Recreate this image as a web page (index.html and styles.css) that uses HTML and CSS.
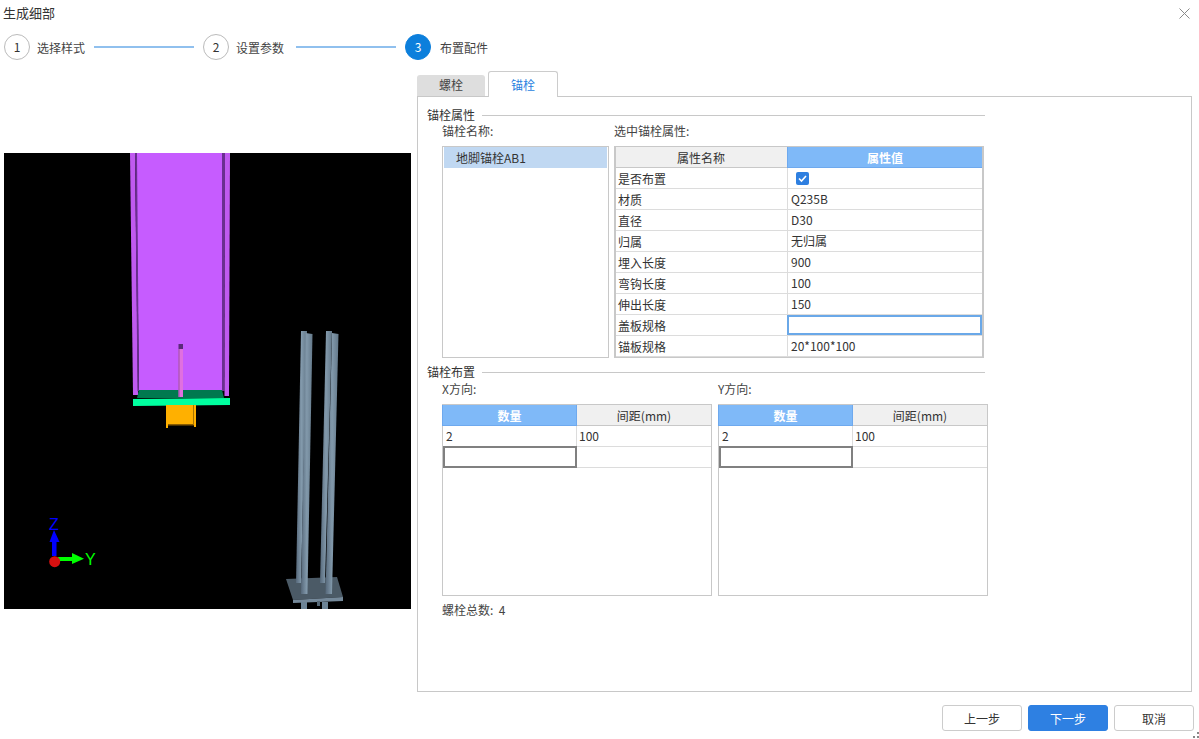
FILE: index.html
```html
<!DOCTYPE html>
<html lang="zh-CN">
<head>
    <meta charset="UTF-8">
    <title>生成细部</title>
    <link rel="stylesheet" href="styles.css">
</head>
<body>
    <div class="dialog">
        <div class="title-bar">
            <span>生成细部</span>
            <svg class="close-icon" width="11" height="11" viewBox="0 0 11 11"><path d="M.5 .5l10 10M10.500 .5l-10 10" stroke="#8a8a8a" fill="none"/></svg>
        </div>

        <div class="steps">
            <div class="step-num">1</div>
            <div class="step-label">选择样式</div>
            <div class="step-line"></div>
            <div class="step-num">2</div>
            <div class="step-label">设置参数</div>
            <div class="step-line"></div>
            <div class="step-num active">3</div>
            <div class="step-label">布置配件</div>
        </div>

        <div class="main">
            <svg class="viewer" width="407" height="456" viewBox="4 153 407 456">
                <defs>
                    <linearGradient id="rod">
                        <stop offset="0" stop-color="#56687a"/>
                        <stop offset="0.500" stop-color="#8299ab"/>
                        <stop offset="1" stop-color="#64798a"/>
                    </linearGradient>
                </defs>
                <rect x="4" y="153" width="407" height="456" fill="#000"/>
                <!-- column -->
                <polygon points="136,153 222,153 222,391 139,391" fill="#c65cff"/>
                <polygon points="130,153 135,153 138,395 133,395" fill="#c05af0"/>
                <polygon points="135,153 137,153 139,391 137.500,391" fill="#6a2f90"/>
                <polygon points="222,153 225,153 224.500,391 222,391" fill="#6a2f90"/>
                <polygon points="225,153 230,153 229,396 224.500,396" fill="#c05af0"/>
                <polygon points="139,390 222,390 224,398 137,398" fill="#00794f"/>
                <polygon points="133,399 230,398 230,405 133,406" fill="#00ff9f"/>
                <polygon points="166,405 196,405 196,427 194,427 194,425 168,425 168,428 166,428" fill="#ffb000"/>
                <polygon points="168,424 194,424 194,425.500 168,425.500" fill="#8a5c00"/>
                <polygon points="193,405 194,405 194,425 193,425" fill="#a87400"/>
                <!-- rod inside column -->
                <rect x="178.500" y="349" width="4.500" height="48" fill="#e070e0"/>
                <rect x="178.500" y="349" width="1" height="48" fill="#9a4aa8"/>
                <rect x="178.500" y="344" width="4.500" height="5" fill="#5a2a7a"/>
                <!-- anchor bolts -->
                <polygon points="286,579 337,577 343,597 293,600" fill="#4b5a66"/>
                <polygon points="293,600 343,597 343,601 293,603" fill="#75899a"/>
                <polygon points="301,602 307,602 307,609 301,609" fill="#6d8496"/>
                <polygon points="322,602 328,602 328,609 322,609" fill="#6d8496"/>
                <polygon points="317,601 320,601 320,606 317,606" fill="#566876"/>
                <polygon points="301,331 307,331 301,583 296,583" fill="url(#rod)"/>
                <polygon points="326,331 332,331 325,583 320,583" fill="url(#rod)"/>
                <polygon points="305.500,333 312.500,334 307.500,594 301,594" fill="url(#rod)"/>
                <polygon points="332,333 338.500,334 332,594 325.500,594" fill="url(#rod)"/>
                <!-- axes -->
                <rect x="52" y="541" width="4.500" height="15" fill="#0000ff"/>
                <polygon points="54,530 59.500,542 49.500,542" fill="#0000ff"/>
                <rect x="58" y="557" width="15" height="4" fill="#00ff00"/>
                <polygon points="72,553 84,558.800 72,564" fill="#00ff00"/>
                <circle cx="54.700" cy="561.700" r="5.500" fill="#d81010"/>
                <text class="axis-label" x="49" y="530" fill="#0000ff">Z</text>
                <text class="axis-label" x="85" y="565" fill="#00ff00">Y</text>
            </svg>

            <div class="right-col">
                <div class="tabs">
                    <div class="tab">螺栓</div>
                    <div class="tab active">锚栓</div>
                </div>
                <div class="panel">
                    <div class="group-title"><span>锚栓属性</span><div class="group-line"></div></div>
                    <div class="attr-row">
                        <div class="name-col">
                            <div class="field-label">锚栓名称:</div>
                            <div class="name-list">
                                <div class="name-item">地脚锚栓AB1</div>
                            </div>
                        </div>
                        <div class="attr-col">
                            <div class="field-label">选中锚栓属性:</div>
                            <div class="attr-box">
                                <table class="grid attr-grid">
                                    <tr><th>属性名称</th><th class="on">属性值</th></tr>
                                    <tr><td>是否布置</td><td><span class="check"><svg width="13" height="13" viewBox="0 0 13 13"><path d="M3 6.500l2.500 2.500 4.500-5" stroke="#fff" stroke-width="1.600" fill="none"/></svg></span></td></tr>
                                    <tr><td>材质</td><td>Q235B</td></tr>
                                    <tr><td>直径</td><td>D30</td></tr>
                                    <tr><td>归属</td><td>无归属</td></tr>
                                    <tr><td>埋入长度</td><td>900</td></tr>
                                    <tr><td>弯钩长度</td><td>100</td></tr>
                                    <tr><td>伸出长度</td><td>150</td></tr>
                                    <tr><td>盖板规格</td><td class="focus-blue"></td></tr>
                                    <tr><td>锚板规格</td><td>20*100*100</td></tr>
                                </table>
                            </div>
                        </div>
                    </div>

                    <div class="group-title second"><span>锚栓布置</span><div class="group-line"></div></div>
                    <div class="layout-row">
                        <div class="layout-col">
                            <div class="field-label">X方向:</div>
                            <div class="layout-box">
                                <table class="grid layout-grid">
                                    <tr><th class="on">数量</th><th>间距(mm)</th></tr>
                                    <tr><td>2</td><td>100</td></tr>
                                    <tr><td class="focus-gray"></td><td></td></tr>
                                </table>
                            </div>
                        </div>
                        <div class="layout-col">
                            <div class="field-label">Y方向:</div>
                            <div class="layout-box">
                                <table class="grid layout-grid">
                                    <tr><th class="on">数量</th><th>间距(mm)</th></tr>
                                    <tr><td>2</td><td>100</td></tr>
                                    <tr><td class="focus-gray"></td><td></td></tr>
                                </table>
                            </div>
                        </div>
                    </div>
                    <div class="total">螺栓总数:&nbsp; 4</div>
                </div>
            </div>
        </div>

        <div class="footer">
            <button class="btn">上一步</button>
            <button class="btn primary">下一步</button>
            <button class="btn">取消</button>
        </div>
        <svg class="grip" width="6" height="6" viewBox="0 0 6 6"><path d="M4 0h2v2h-2zM0 4h2v2h-2zM4 4h2v2h-2z" fill="#888"/></svg>
    </div>
</body>
</html>
```

FILE: styles.css
```css
* {
    box-sizing: border-box;
}
html, body {
    margin: 0;
    height: 100%;
    overflow: hidden;
}
body {
    font-family: "Noto Sans CJK SC", "Noto Sans", sans-serif;
    font-size: 12px;
    color: #333;
    background: #fff;
}
.dialog {
    position: relative;
    height: 739px;
    display: flex;
    flex-direction: column;
}
.title-bar {
    height: 34px;
    padding: 3px 9px 0 3px;
    display: flex;
    justify-content: space-between;
    font-size: 13px;
    line-height: 19px;
}
.close-icon {
    margin-top: 5px;
}
.steps {
    height: 26px;
    padding-left: 4px;
    display: flex;
    align-items: center;
}
.step-num {
    width: 26px;
    height: 26px;
    border: 1px solid #bbb;
    border-radius: 50%;
    text-align: center;
    line-height: 23px;
    font-size: 12px;
}
.step-num.active {
    background: #0c7fdc;
    border-color: #0c7fdc;
    color: #fff;
}
.step-label {
    margin-left: 7px;
    color: #444;
}
.step-num.active + .step-label {
    margin-left: 9px;
}
.step-line {
    width: 100px;
    height: 2px;
    margin: 0 9px;
    background: #90c0ee;
}
.steps .step-line:nth-child(6) {
    margin-left: 12px;
}
.main {
    margin-top: 11px;
    padding-left: 4px;
    display: flex;
}
.viewer {
    margin-top: 82px;
    display: block;
}
.axis-label {
    font-family: "Liberation Sans", sans-serif;
    font-size: 16px;
}
.right-col {
    margin-left: 6px;
    width: 775px;
}
.tabs {
    height: 25px;
    display: flex;
    align-items: flex-end;
}
.tab {
    width: 68px;
    height: 21px;
    margin-right: 3px;
    background: #dedede;
    border-radius: 3px 3px 0 0;
    text-align: center;
    line-height: 20px;
    color: #444;
}
.tab.active {
    position: relative;
    width: 70px;
    height: 26px;
    margin-bottom: -1px;
    background: #fff;
    border: 1px solid #ccc;
    border-bottom: none;
    color: #2a7fe0;
    line-height: 26px;
}
.panel {
    height: 596px;
    border: 1px solid #c8c8c8;
    padding: 9px 0 0 9px;
}
.group-title {
    width: 558px;
    height: 18px;
    display: flex;
    align-items: center;
    line-height: 18px;
}
.group-title.second {
    margin-top: 5px;
}
.group-line {
    flex: 1;
    height: 1px;
    margin-left: 7px;
    background: #c8c8c8;
}
.field-label {
    height: 15px;
    line-height: 15px;
    color: #444;
}
.attr-row {
    display: flex;
    margin-top: -1px;
    padding-left: 15px;
}
.name-col {
    width: 172px;
}
.name-list {
    width: 167px;
    height: 212px;
    margin-top: 8px;
    border: 1px solid #c8c8c8;
    padding: 0 1px;
}
.name-item {
    height: 21px;
    padding-left: 12px;
    line-height: 21px;
    background: #c0d8f2;
}
.attr-col {
    width: 370px;
}
.attr-box {
    width: 370px;
    height: 212px;
    margin-top: 8px;
    border: 1px solid #c8c8c8;
    border-left-width: 2px;
    border-right-width: 2px;
}
.layout-box {
    width: 270px;
    height: 192px;
    margin-top: 8px;
    border: 1px solid #c8c8c8;
}
.grid {
    width: 100%;
    table-layout: fixed;
    border-collapse: separate;
    border-spacing: 0;
}
.grid th, .grid td {
    height: 21px;
    padding: 0 3px;
    border-right: 1px solid #dcdcdc;
    border-bottom: 1px solid #dcdcdc;
    line-height: 19px;
    font-weight: normal;
}
.grid tr > :last-child {
    border-right: none;
}
.grid th {
    background: #f0f0f0;
    border-bottom-color: #c8c8c8;
    text-align: center;
}
.grid th.on {
    background: #7fb9f8;
    border-color: #6ea9ee;
    box-shadow: -1px 0 0 #6ea9ee;
    color: #fff;
    font-weight: bold;
}
.attr-grid th:first-child, .attr-grid td:first-child {
    width: 172px;
    padding-left: 2px;
}
.attr-grid td:last-child, .layout-grid td {
    padding-bottom: 2px;
    line-height: 17px;
}
.layout-grid td:last-child {
    padding-left: 2px;
}
.grid td.focus-blue, .grid td.focus-gray {
    position: relative;
}
.grid td.focus-blue::after, .grid td.focus-gray::after {
    content: "";
    position: absolute;
}
.grid td.focus-blue::after {
    top: 0;
    right: 0;
    bottom: 0;
    left: -1px;
    border: 2px solid #6aa8e8;
}
.grid td.focus-gray::after {
    top: -1px;
    right: -1px;
    bottom: -1px;
    left: 0;
    border: 2px solid #808080;
}
.check {
    width: 13px;
    height: 13px;
    margin: 2px 0 0 5px;
    display: block;
    background: #2e7fe0;
    border-radius: 2px;
}
.check svg {
    display: block;
}
.layout-row {
    display: flex;
    gap: 6px;
    padding-left: 15px;
}
.layout-col {
    width: 270px;
}
.total {
    margin: 6px 0 0 15px;
    line-height: 15px;
    color: #444;
}
.footer {
    margin-top: 13px;
    padding-right: 5px;
    display: flex;
    justify-content: flex-end;
    gap: 6px;
}
.btn {
    width: 80px;
    height: 26px;
    padding: 0;
    background: #fff;
    border: 1px solid #ccc;
    border-radius: 3px;
    font: inherit;
    color: #333;
}
.btn.primary {
    background: #2e80e2;
    border-color: #2e80e2;
    color: #fff;
}
.grip {
    position: absolute;
    right: 0;
    bottom: 1px;
}
```
